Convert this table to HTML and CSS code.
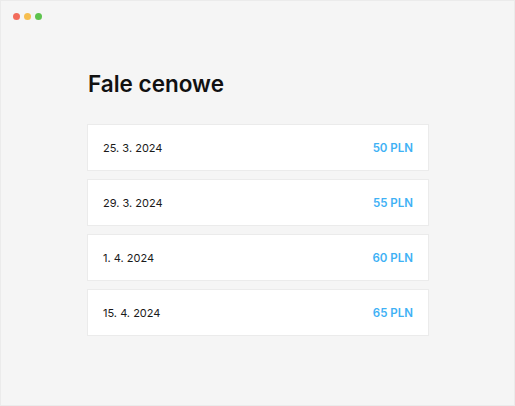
FILE: index.html
```html
<!DOCTYPE html>
<html lang="pl">
<head>
<meta charset="utf-8">
<title>Fale cenowe</title>
<link rel="stylesheet" href="styles.css">
</head>
<body>
<div class="window">
  <div class="dots">
    <span class="dot red"></span>
    <span class="dot yellow"></span>
    <span class="dot green"></span>
  </div>
  <main class="content">
    <h1 class="title">Fale cenowe</h1>
    <ul class="list">
      <li class="row"><span class="date">25. 3. 2024</span><span class="price">50 PLN</span></li>
      <li class="row"><span class="date">29. 3. 2024</span><span class="price">55 PLN</span></li>
      <li class="row"><span class="date">1. 4. 2024</span><span class="price">60 PLN</span></li>
      <li class="row"><span class="date">15. 4. 2024</span><span class="price">65 PLN</span></li>
    </ul>
  </main>
</div>
</body>
</html>
```

FILE: styles.css
```css
* { box-sizing: border-box; }
html, body { margin: 0; padding: 0; }
body {
  font-family: "Inter", "Lato", sans-serif;
  background: #f5f5f5;
}
.window {
  width: 515px;
  height: 406px;
  background: #f5f5f5;
  border: 1px solid #ebebeb;
  padding: 12px 0 0 12px;
}
.dots {
  display: flex;
  gap: 4px;
}
.dot {
  width: 7px;
  height: 7px;
  border-radius: 50%;
  display: block;
}
.red { background: #f26b5b; }
.yellow { background: #f6be4f; }
.green { background: #5dc34e; }
.content {
  padding: 50px 0 0 74px;
  width: 416px;
}
.title {
  margin: 0 0 26px 1px;
  font-size: 22.5px;
  font-weight: 600;
  color: #111;
  line-height: 28px;
}
.list {
  list-style: none;
  margin: 0;
  padding: 0;
  display: flex;
  flex-direction: column;
  gap: 8px;
}
.row {
  height: 47px;
  background: #fff;
  border: 1px solid #ebebeb;
  display: flex;
  align-items: center;
  justify-content: space-between;
  padding: 0 15px 0 15px;
  font-size: 11px;
}
.date { color: #1a1a1a; }
.price { color: #3eb1f5; font-weight: 600; font-size: 11.5px; }
```
